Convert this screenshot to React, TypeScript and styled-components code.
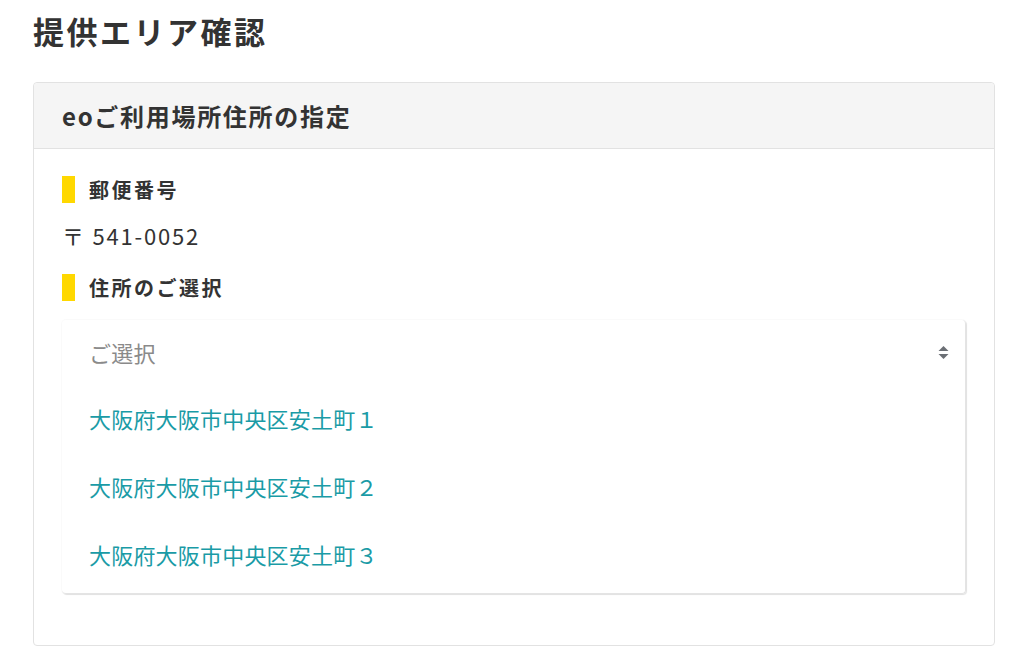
import styled, { createGlobalStyle } from 'styled-components';

const GlobalStyle = createGlobalStyle`
  body {
    margin: 0;
    background: #fff;
    font-family: "Noto Sans CJK JP", "Noto Sans", sans-serif;
    color: #333;
  }
`;

const Page = styled.div`
  padding: 10px 29px 0 33px;
`;

const PageTitle = styled.h1`
  margin: 0 0 30px;
  font-size: 31px;
  letter-spacing: 2.5px;
  line-height: 42px;
  font-weight: 700;
  color: #333;
`;

const Card = styled.section`
  border: 1px solid #e2e2e2;
  border-radius: 4px;
  height: 564px;
  box-sizing: border-box;
`;

const CardHeader = styled.div`
  background: #f5f5f5;
  border-bottom: 1px solid #e2e2e2;
  border-radius: 4px 4px 0 0;
  height: 65px;
  display: flex;
  align-items: center;
  padding: 0 28px;
  font-size: 24px;
  letter-spacing: 1.7px;
  font-weight: 700;
  color: #333;
`;

const CardBody = styled.div`
  padding: 26px 28px 0;
`;

const Label = styled.div`
  display: flex;
  align-items: center;
  gap: 14px;
  height: 28px;
  font-size: 20px;
  letter-spacing: 2.5px;
  font-weight: 700;
  color: #333;
  &::before {
    content: '';
    width: 13px;
    height: 27px;
    background: #ffd800;
  }
`;

const Postal = styled.div`
  margin: 17px 0 23px;
  font-size: 22px;
  letter-spacing: 1.8px;
  line-height: 30px;
  color: #333;
`;

const Menu = styled.div`
  margin-top: 19px;
  border-radius: 4px;
  box-shadow: 1px 1px 1px rgba(0, 0, 0, 0.1), 0 0 0 1px rgba(0, 0, 0, 0.02);
  border-right: 1px solid #e4e4e4;
  border-bottom: 1px solid #e4e4e4;
  padding-bottom: 5px;
`;

const Placeholder = styled.div`
  display: flex;
  align-items: center;
  justify-content: space-between;
  height: 64px;
  padding: 0 16px 0 27px;
  font-size: 22px;
  letter-spacing: 0.3px;
  color: #8a8a8a;
`;

const Option = styled.div`
  height: 68px;
  display: flex;
  align-items: center;
  padding: 0 27px;
  font-size: 22px;
  letter-spacing: 0.2px;
  color: #1a9ba6;
`;

const SortIcon = () => (
  <svg width="11" height="13" viewBox="0 0 11 13" fill="#6b6f75">
    <path d="M5.5 0 L10.5 5 H0.5 Z" />
    <path d="M5.5 13 L10.5 8 H0.5 Z" />
  </svg>
);

const options = ['大阪府大阪市中央区安土町１', '大阪府大阪市中央区安土町２', '大阪府大阪市中央区安土町３'];

export default function App() {
  return (
    <>
      <GlobalStyle />
      <Page>
        <PageTitle>提供エリア確認</PageTitle>
        <Card>
          <CardHeader>eoご利用場所住所の指定</CardHeader>
          <CardBody>
            <Label>郵便番号</Label>
            <Postal>〒 541-0052</Postal>
            <Label>住所のご選択</Label>
            <Menu>
              <Placeholder>
                ご選択
                <SortIcon />
              </Placeholder>
              {options.map((o) => (
                <Option key={o}>{o}</Option>
              ))}
            </Menu>
          </CardBody>
        </Card>
      </Page>
    </>
  );
}
